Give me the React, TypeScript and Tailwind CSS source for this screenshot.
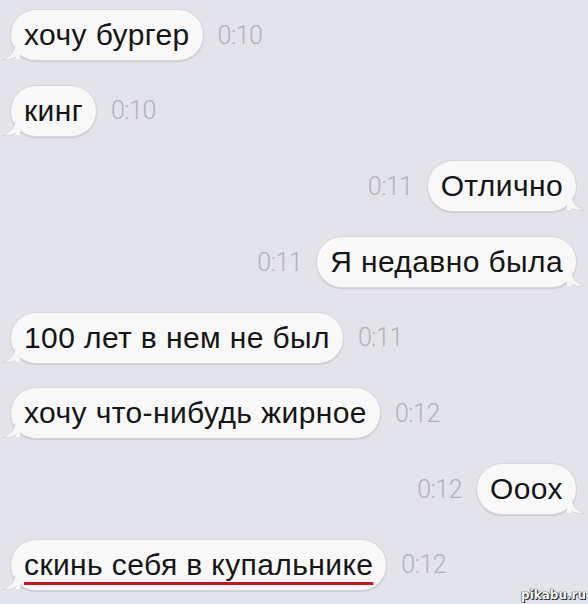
import React from "react"

type Msg = { text: string; time: string; out?: boolean; mark?: boolean }

const messages: Msg[] = [
  { text: "хочу бургер", time: "0:10" },
  { text: "кинг", time: "0:10" },
  { text: "Отлично", time: "0:11", out: true },
  { text: "Я недавно была", time: "0:11", out: true },
  { text: "100 лет в нем не был", time: "0:11" },
  { text: "хочу что-нибудь жирное", time: "0:12" },
  { text: "Ооох", time: "0:12", out: true },
  { text: "скинь себя в купальнике", time: "0:12", mark: true },
]

function Tail({ out }: { out?: boolean }) {
  return (
    <svg
      width="18"
      height="16"
      viewBox="0 0 18 16"
      className={out ? "absolute -right-[9px] bottom-[-1px] -scale-x-100" : "absolute -left-[9px] bottom-[-1px]"}
    >
      <path
        d="M13 0 C13 6 9 11 1 14.5 C6 15 11 14 15 11.5 L18 11.5 L18 0 Z"
        fill="#f8f8f9"
        stroke="#cfd0d6"
        strokeWidth="0.8"
      />
      <rect x="13.6" y="0" width="5" height="14" fill="#f8f8f9" />
    </svg>
  )
}

function Time({ t }: { t: string }) {
  return <span className="font-['Roboto',sans-serif] font-light text-[25px] leading-none text-[#b0b1b9] tracking-[-0.5px]">{t}</span>
}

function Bubble({ m }: { m: Msg }) {
  return (
    <div className={m.out ? "flex items-center justify-end gap-[14px] pr-[11px]" : "flex items-center gap-[14px] pl-[10px]"}>
      {m.out && <Time t={m.time} />}
      <div className="relative h-[52px] flex items-center rounded-[26px] bg-[#f8f8f9] border border-[#d6d7dc] shadow-[0_1px_1px_rgba(0,0,0,0.12)] px-[13px]">
        <Tail out={m.out} />
        <span
          className={
            "relative font-['Liberation_Sans',Arial,sans-serif] text-[30px] text-[#151515] leading-none tracking-[0.4px]" +
            (m.mark ? " underline decoration-[#c8141e] decoration-[3px] underline-offset-[7px]" : "")
          }
        >
          {m.text}
        </span>
      </div>
      {!m.out && <Time t={m.time} />}
    </div>
  )
}

export default function App() {
  return (
    <div className="relative w-[588px] h-[604px] overflow-hidden bg-[#e3e4ea] pt-[9px] flex flex-col gap-[23.7px]">
      {messages.map((m, i) => (
        <Bubble key={i} m={m} />
      ))}
      <span className="absolute right-[2px] bottom-[3px] font-['DejaVu_Sans',sans-serif] font-bold text-[12px] leading-none text-white [text-shadow:0_0_1px_#000,0_0_1px_#000,1px_1px_0_#333]">
        pikabu.ru
      </span>
    </div>
  )
}
